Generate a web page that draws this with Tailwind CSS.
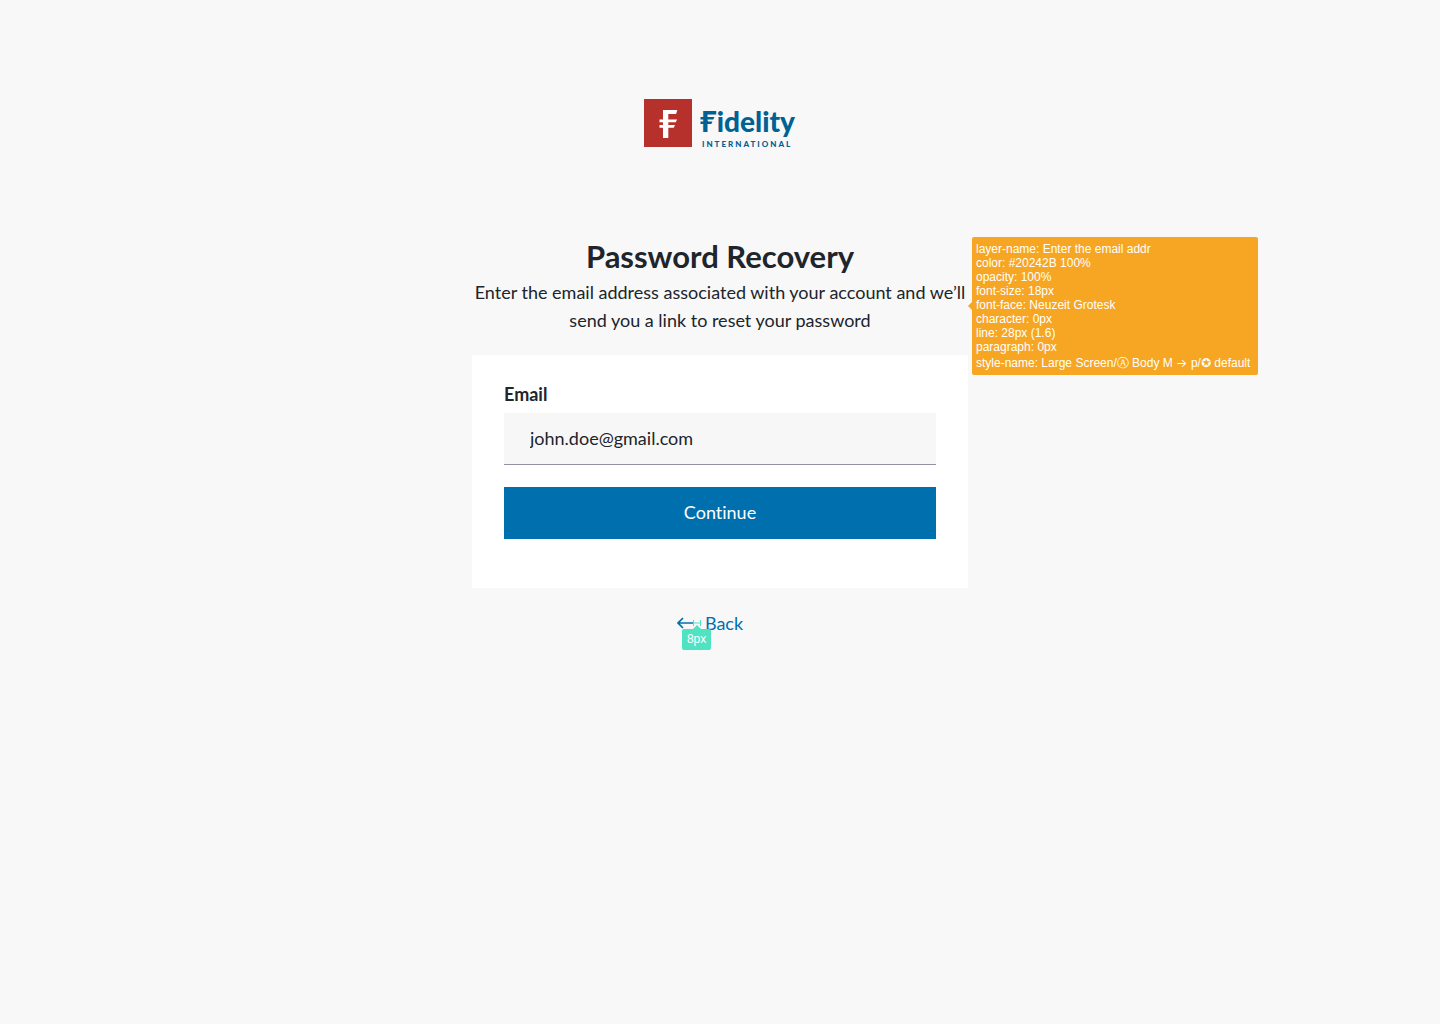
<!DOCTYPE html>
<html lang="en">
<head>
<meta charset="utf-8">
<meta name="viewport" content="width=device-width, initial-scale=1">
<title>Password Recovery</title>
<script src="https://cdn.jsdelivr.net/npm/@tailwindcss/browser@4"></script>
</head>
<body class="min-h-screen bg-[#f8f8f8] font-['Lato',sans-serif] text-lg leading-7 text-[#20242b] [font-variant-ligatures:none]">
<main class="mx-auto flex w-full max-w-[496px] flex-col items-center pt-[99px]">
  <svg class="h-12 w-[152px] overflow-visible" viewBox="0 0 152 48" role="img" aria-label="Fidelity International">
    <rect width="48" height="48" fill="#b7312c"/>
    <path fill="#fff" d="M19 11h14.300l-1.200 4H24.300v5.500h8.700l-1.200 2.800h-7.500V26h6.700l-1.200 2.800h-5.500V39H19V28.800h-3.500V26H19v-2.700h-3.500v-2.800H19z"/>
    <g fill="#006192">
      <text x="57" y="33" class="font-['Lato',sans-serif] text-[28px] font-black">Fidelity</text>
      <path fill="#f8f8f8" d="M64 17h7v10h-7z"/>
      <path d="M56.500 18h14l-1.200 2.600H56.500zM56.500 22.600h12l-1.200 2.500H56.500z"/>
      <text x="58" y="48" class="font-['Lato',sans-serif] text-[8px] font-black tracking-[2px]">INTERNATIONAL</text>
    </g>
  </svg>

  <h1 class="mt-[89px] text-[31px] leading-10 font-bold">Password Recovery</h1>

  <div class="relative mt-0.5 w-full text-center">
    <p>Enter the email address associated with your account and we’ll<br>send you a link to reset your password</p>
    <aside class="absolute top-1/2 left-full ml-1 -translate-y-1/2 rounded-xs bg-[#f6a623] pt-[5px] pr-2 pb-[3px] pl-1 text-left font-['Liberation_Sans','DejaVu_Sans',sans-serif] text-xs whitespace-nowrap text-white">
      <span class="absolute top-1/2 -left-1 size-0 -translate-y-1/2 border-y-4 border-r-4 border-y-transparent border-r-[#f6a623]"></span>
      <ul class="leading-[14px]">
        <li>layer-name: Enter the email addr</li>
        <li>color: #20242B 100%</li>
        <li>opacity: 100%</li>
        <li>font-size: 18px</li>
        <li>font-face: Neuzeit Grotesk</li>
        <li>character: 0px</li>
        <li>line: 28px (1.6)</li>
        <li>paragraph: 0px</li>
        <li class="leading-[18px]">style-name: Large Screen/Ⓐ Body M <span class="font-['Inter',sans-serif]">→</span> p/✪ default</li>
      </ul>
    </aside>
  </div>

  <form class="mt-[21px] w-full bg-white px-8 pt-[25px] pb-[49px]">
    <label for="email" class="block font-bold">Email</label>
    <input id="email" type="email" value="john.doe@gmail.com" class="mt-[5px] block h-[52px] w-full border-b border-[#9192a0] bg-[#f7f7f7] px-[26px] pb-0.5">
    <button type="button" class="mt-[22px] block h-[52px] w-full bg-[#006fae] pb-0.5 text-white">Continue</button>
  </form>

  <div class="relative mt-[21px] mr-5 text-[#006fae]">
    <a href="#" class="flex items-center gap-[11px]">
      <svg class="h-3 w-[17px]" viewBox="0 0 17 12" fill="none" stroke="currentColor" stroke-width="1.700" aria-hidden="true"><path d="M6 1 1 6l5 5M1 6h16"/></svg>
      Back
    </a>
    <svg class="absolute top-[11px] left-4 h-[6px] w-2" viewBox="0 0 8 6" stroke="#50e3c2" fill="none" aria-hidden="true"><path d="M.5 0v6M7.500 0v6M0 3h8"/></svg>
    <span class="absolute top-5 left-[5px] rounded-xs bg-[#50e3c2] px-[5px] font-['Liberation_Sans',sans-serif] text-xs leading-[21px] text-white"><span class="absolute -top-1 left-1/2 size-0 -translate-x-1/2 border-x-4 border-b-4 border-x-transparent border-b-[#50e3c2]"></span>8px</span>
  </div>
</main>
</body>
</html>
